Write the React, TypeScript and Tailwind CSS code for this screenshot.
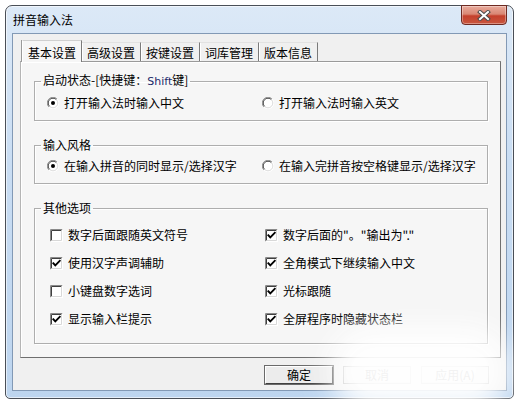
import React from "react";

function Radio({ checked }: { checked?: boolean }) {
  return (
    <svg width="12" height="12" viewBox="0 0 12 12" className="shrink-0">
      <circle cx="6" cy="6" r="5.5" fill="#fff" />
      <path d="M1.9 10.1 A5.5 5.5 0 0 1 10.1 1.9" stroke="#9a9a9a" fill="none" />
      <path d="M2.6 9.4 A4.6 4.6 0 0 1 9.4 2.6" stroke="#404040" fill="none" />
      <path d="M10.1 1.9 A5.5 5.5 0 0 1 1.9 10.1" stroke="#ffffff" fill="none" />
      <path d="M9.4 2.6 A4.6 4.6 0 0 1 2.6 9.4" stroke="#dcdcdc" fill="none" />
      {checked && <circle cx="6" cy="6" r="2" fill="#000" />}
    </svg>
  );
}

function Check({ checked }: { checked?: boolean }) {
  return (
    <svg width="13" height="13" viewBox="0 0 13 13" className="shrink-0">
      <rect x="0" y="0" width="13" height="13" fill="#fff" />
      <path d="M0.5 12.5 V0.5 H12.5" stroke="#8a8a8a" fill="none" />
      <path d="M1.5 11.5 V1.5 H11.5" stroke="#404040" fill="none" />
      <path d="M0.5 12.5 H12.5 V0.5" stroke="#ffffff" fill="none" />
      <path d="M1.5 11.5 H11.5 V1.5" stroke="#d8d8d8" fill="none" />
      {checked && (
        <path d="M3.3 6.2 L5.3 8.4 L9.8 3.8" stroke="#000" strokeWidth="1.8" fill="none" strokeLinecap="square" />
      )}
    </svg>
  );
}

function CheckRow({ checked, label }: { checked?: boolean; label: string }) {
  return (
    <div className="flex items-center h-[14px] w-[215px]">
      <Check checked={checked} />
      <span className="ml-[5px] leading-[14px] whitespace-nowrap">{label}</span>
    </div>
  );
}

function RadioRow({ checked, label }: { checked?: boolean; label: string }) {
  return (
    <div className="flex items-center h-[14px] w-[215px]">
      <Radio checked={checked} />
      <span className="ml-[5px] leading-[14px] whitespace-nowrap">{label}</span>
    </div>
  );
}

const tabs = ["基本设置", "高级设置", "按键设置", "词库管理", "版本信息"];

export default function App() {
  return (
    <div className="relative w-[520px] h-[403px] bg-white pt-[5px] pl-[5px] text-[12px] text-black font-['Noto_Sans_CJK_SC','Noto_Sans',sans-serif] overflow-hidden">
      <div className="relative w-[509px] h-[394px] rounded-t-[7px] rounded-b-[5px] border border-[#4a4f57] bg-[linear-gradient(180deg,#dce9f7_0%,#c9ddf3_40%,#bdd5ef_100%)] flex flex-col px-[6px] pb-[7px] shadow-[inset_0_0_0_1px_rgba(255,255,255,0.6)]">
        <div className="h-[27px] flex items-start justify-between">
          <span className="mt-[7px] ml-[1px] leading-[14px]">拼音输入法</span>
          <div className="mt-[-1px] w-[46px] h-[20px] rounded-b-[4px] border border-[#6e2a22] bg-[linear-gradient(180deg,#e9ab9c_0%,#d98774_45%,#c4402c_55%,#c9573f_100%)] flex items-center justify-center shadow-[inset_0_0_0_1px_rgba(255,255,255,0.35)]">
            <svg width="14" height="11" viewBox="0 0 14 11">
              <path d="M3 2 L11 9 M11 2 L3 9" stroke="#4a4a4a" strokeWidth="4" strokeLinecap="square" fill="none" />
              <path d="M3 2 L11 9 M11 2 L3 9" stroke="#ffffff" strokeWidth="2" strokeLinecap="square" fill="none" />
            </svg>
          </div>
        </div>
        <div className="flex-1 border border-[#8299b5] bg-[#f0f0f0] flex flex-col pl-[7px] pr-[5px] pt-[6px]">
          <div className="h-[21px] flex pl-[2px] items-end">
            {tabs.map((t, i) =>
              i === 0 ? (
                <div
                  key={t}
                  className="relative z-10 w-[60px] h-[22px] -mb-[1px] border-t border-l border-r border-l-[#ffffff] border-t-[#d0d0d0] border-r-[#7a7a7a] bg-[#f6f6f6] flex justify-center pt-[5px] leading-[14px] shadow-[-1px_0_0_#9a9a9a]"
                >
                  {t}
                </div>
              ) : (
                <div
                  key={t}
                  className="w-[59px] h-[19px] border-t border-r border-t-[#e2e2e2] border-r-[#7a7a7a] flex justify-center pt-[3px] leading-[14px] shadow-[inset_1px_0_0_#fff]"
                >
                  {t}
                </div>
              )
            )}
          </div>
          <div className="h-[297px] border border-t-[#9a9a9a] border-l-[#b5b5b5] border-r-[#6f6f6f] border-b-[#6f6f6f] bg-[#f6f6f6] pt-[11px] pl-[13px] pr-[12px] shadow-[inset_1px_1px_0_#fff]">
            <fieldset className="border border-[#aeaeae] pl-[6px] pb-[10px] shadow-[1px_1px_0_#fff,inset_1px_1px_0_#fff]">
              <legend className="px-[2px] leading-[14px]">
                启动状态-[快捷键：<span className="font-['Tahoma','DejaVu_Sans',sans-serif] text-[11px] text-[#1c2a6a]">Shift</span>键]
              </legend>
              <div className="mt-[7px] pl-[6px] flex">
                <RadioRow checked label="打开输入法时输入中文" />
                <RadioRow label="打开输入法时输入英文" />
              </div>
            </fieldset>
            <fieldset className="mt-[17px] border border-[#aeaeae] pl-[6px] pb-[10px] shadow-[1px_1px_0_#fff,inset_1px_1px_0_#fff]">
              <legend className="px-[2px] leading-[14px]">输入风格</legend>
              <div className="mt-[7px] pl-[6px] flex">
                <RadioRow checked label="在输入拼音的同时显示/选择汉字" />
                <RadioRow label="在输入完拼音按空格键显示/选择汉字" />
              </div>
            </fieldset>
            <fieldset className="mt-[17px] border border-[#aeaeae] pl-[6px] pb-[17px] shadow-[1px_1px_0_#fff,inset_1px_1px_0_#fff]">
              <legend className="px-[2px] leading-[14px]">其他选项</legend>
              <div className="mt-[13px] pl-[9px] flex flex-col gap-[14px]">
                <div className="flex">
                  <CheckRow label="数字后面跟随英文符号" />
                  <CheckRow checked label={'数字后面的"。"输出为"."'} />
                </div>
                <div className="flex">
                  <CheckRow checked label="使用汉字声调辅助" />
                  <CheckRow checked label="全角模式下继续输入中文" />
                </div>
                <div className="flex">
                  <CheckRow label="小键盘数字选词" />
                  <CheckRow checked label="光标跟随" />
                </div>
                <div className="flex">
                  <CheckRow checked label="显示输入栏提示" />
                  <CheckRow checked label="全屏程序时隐藏状态栏" />
                </div>
              </div>
            </fieldset>
          </div>
          <div className="mt-[8px] flex pl-[245px] gap-[10px]">
            <div className="w-[68px] h-[18px] border border-t-[#ffffff] border-l-[#ffffff] border-r-[#404040] border-b-[#404040] bg-[#ececec] flex items-center justify-center leading-[14px] shadow-[0_0_0_1px_#6a6a6a]">
              确定
            </div>
            <div className="w-[68px] h-[18px] border border-[#a0a0a0] bg-[#ececec] flex items-center justify-center leading-[14px]">
              取消
            </div>
            <div className="w-[68px] h-[18px] border border-[#a0a0a0] bg-[#ececec] flex items-center justify-center leading-[14px]">
              应用(A)
            </div>
          </div>
        </div>
      </div>
      <div className="absolute left-[330px] top-[328px] w-[180px] h-[85px] rounded-full bg-white blur-[14px] opacity-95" />
    </div>
  );
}
